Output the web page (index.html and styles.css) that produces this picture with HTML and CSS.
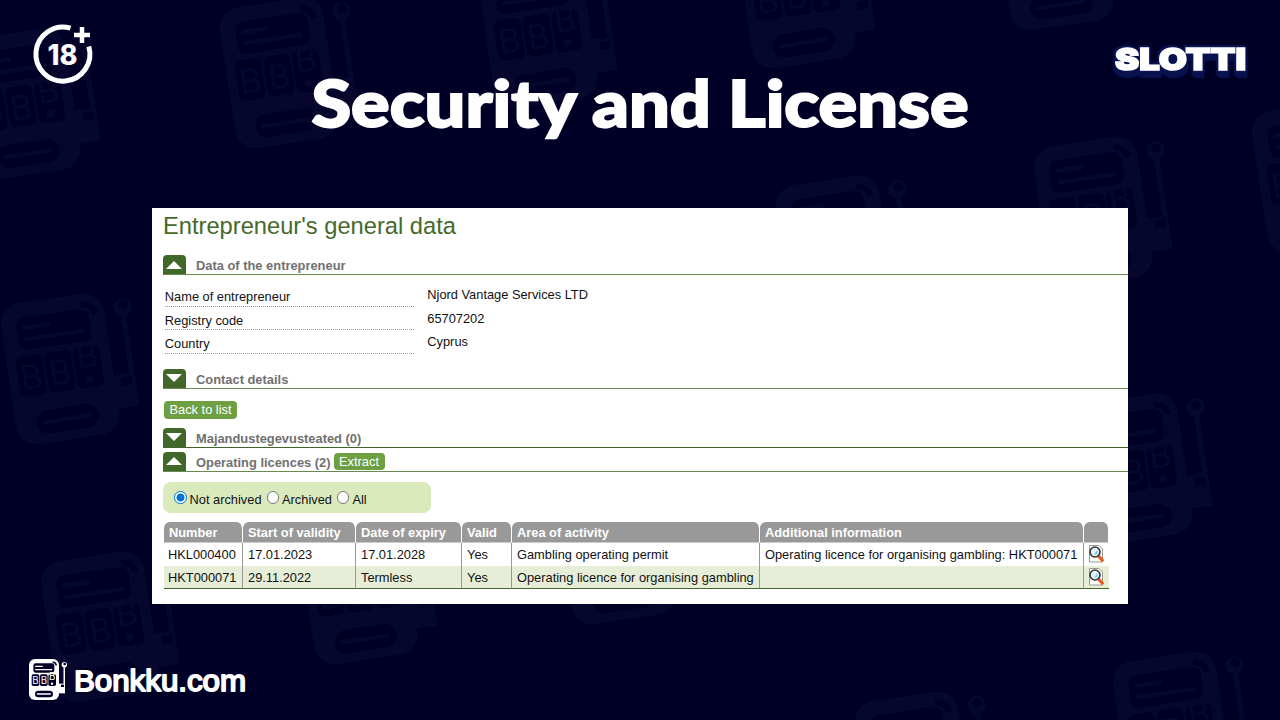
FILE: index.html
```
<!DOCTYPE html>
<html lang="en">
<head>
    <meta charset="UTF-8">
    <meta name="viewport" content="width=device-width, initial-scale=1.0">
    <title>Security and License</title>
    <link rel="stylesheet" href="styles.css">
</head>
<body>
    <!-- Slot machine pattern -->
    <svg class="pattern" width="1280" height="720" viewBox="0 0 1280 720">
        <defs>
            <g id="machine">
                <rect class="fill" x="0" y="0" width="90" height="123" rx="18"/>
                <path class="fill" d="M80 74h28v29H80z"/>
                <path class="fill" d="M103.500 22h4.500v60h-4.500z"/>
                <circle class="fill" cx="106" cy="17" r="8"/>
                <circle class="hole" cx="107" cy="15" r="4"/>
                <path class="hole" d="M96 77h9v7h-9z"/>
                <path class="hole-line" d="M71 9q9 1 11 10"/>
                <rect class="hole" x="13" y="13" width="63" height="28" rx="7"/>
                <path class="bar" d="M20 22h20M20 32h48"/>
                <rect class="hole" x="8" y="46" width="23" height="35" rx="5"/>
                <rect class="hole" x="33" y="46" width="23" height="35" rx="5"/>
                <rect class="hole" x="58" y="46" width="23" height="35" rx="5"/>
                <text class="reel" x="10" y="75">B</text>
                <text class="reel" x="35" y="75">B</text>
                <text class="reel" x="60" y="64">B</text>
                <circle class="fill" cx="69" cy="74" r="3.500"/>
                <rect class="hole" x="18" y="95" width="54" height="20" rx="10"/>
                <path class="bar" d="M25 105h39"/>
            </g>
        </defs>
        <g class="ghost">
            <use href="#machine" transform="translate(-41 41) rotate(-8.500) scale(1.160)"/>
            <use href="#machine" transform="translate(-2 306) rotate(-8.500) scale(1.160)"/>
            <use href="#machine" transform="translate(38 564) rotate(-8.500) scale(1.160)"/>
            <use href="#machine" transform="translate(217 10) rotate(-8.500) scale(1.160)"/>
            <use href="#machine" transform="translate(296 526) rotate(-8.500) scale(1.160)"/>
            <use href="#machine" transform="translate(476 -30) rotate(-8.500) scale(1.160)"/>
            <use href="#machine" transform="translate(554 486) rotate(-8.500) scale(1.160)"/>
            <use href="#machine" transform="translate(734 -70) rotate(-8.500) scale(1.160)"/>
            <use href="#machine" transform="translate(773 188) rotate(-8.500) scale(1.160)"/>
            <use href="#machine" transform="translate(852 704) rotate(-8.500) scale(1.160)"/>
            <use href="#machine" transform="translate(992 -108) rotate(-8.500) scale(1.160)"/>
            <use href="#machine" transform="translate(1031 149) rotate(-8.500) scale(1.160)"/>
            <use href="#machine" transform="translate(1071 406) rotate(-8.500) scale(1.160)"/>
            <use href="#machine" transform="translate(1110 664) rotate(-8.500) scale(1.160)"/>
            <use href="#machine" transform="translate(1249 114) rotate(-8.500) scale(1.160)"/>
        </g>
    </svg>

    <div class="slide">
        <header class="top">
            <svg class="age" width="62" height="62" viewBox="0 0 62 62">
                <path d="M38.500 4.200A27 27 0 1 0 56.800 22.500" fill="none" stroke="#fff" stroke-width="5"/>
                <path d="M50 3v16M42 11h16" stroke="#fff" stroke-width="4.500"/>
                <text class="age-text" x="15.500" y="40.500" textLength="30" lengthAdjust="spacingAndGlyphs">18</text>
            </svg>
            <h1 class="heading">
                <svg width="664" height="90" viewBox="0 0 664 90">
                    <text class="heading-text" x="2.500" y="56" textLength="657" lengthAdjust="spacingAndGlyphs">Security and License</text>
                </svg>
            </h1>
            <svg class="slotti" width="140" height="36" viewBox="0 0 140 36">
                <text class="slotti-text" x="4" y="26.500" textLength="131" lengthAdjust="spacingAndGlyphs">SLOTTI</text>
            </svg>
        </header>

        <main class="card">
            <h2 class="card-title">Entrepreneur's general data</h2>

            <div class="section">
                <span class="toggle"><svg width="16" height="8" viewBox="0 0 16 8"><path d="M0 8L8 0l8 8z"/></svg></span>
                <span class="section-name">Data of the entrepreneur</span>
            </div>
            <dl class="details">
                <dt>Name of entrepreneur</dt><dd>Njord Vantage Services LTD</dd>
                <dt>Registry code</dt><dd>65707202</dd>
                <dt>Country</dt><dd>Cyprus</dd>
            </dl>

            <div class="section">
                <span class="toggle"><svg width="16" height="8" viewBox="0 0 16 8"><path d="M0 0h16L8 8z"/></svg></span>
                <span class="section-name">Contact details</span>
            </div>
            <a class="btn btn-back">Back to list</a>

            <div class="section section-solid">
                <span class="toggle"><svg width="16" height="8" viewBox="0 0 16 8"><path d="M0 0h16L8 8z"/></svg></span>
                <span class="section-name">Majandustegevusteated (0)</span>
            </div>
            <div class="section section-licences">
                <span class="toggle"><svg width="16" height="8" viewBox="0 0 16 8"><path d="M0 8L8 0l8 8z"/></svg></span>
                <span class="section-name">Operating licences (2)</span>
                <a class="btn btn-extract">Extract</a>
            </div>

            <div class="filter">
                <span class="radio checked"></span><span class="radio-label">Not archived</span>
                <span class="radio"></span><span class="radio-label">Archived</span>
                <span class="radio"></span><span class="radio-label">All</span>
            </div>

            <table class="licences">
                <colgroup>
                    <col class="c1"><col class="c2"><col class="c3"><col class="c4"><col class="c5"><col class="c6"><col class="c7">
                </colgroup>
                <thead>
                    <tr>
                        <th>Number</th>
                        <th>Start of validity</th>
                        <th>Date of expiry</th>
                        <th>Valid</th>
                        <th>Area of activity</th>
                        <th>Additional information</th>
                        <th></th>
                    </tr>
                </thead>
                <tbody>
                    <tr>
                        <td>HKL000400</td>
                        <td>17.01.2023</td>
                        <td>17.01.2028</td>
                        <td>Yes</td>
                        <td>Gambling operating permit</td>
                        <td>Operating licence for organising gambling: HKT000071</td>
                        <td class="view">
                            <svg width="17" height="18" viewBox="0 0 17 18">
                                <path d="M1.500.500h9.500l3.500 3.500v13H1.500z" fill="#fff" stroke="#999"/>
                                <path d="M10.500 11l4.700 5.200" stroke="#ee5a12" stroke-width="3.200"/>
                                <circle cx="7" cy="7" r="5" fill="#e4f5fb" stroke="#333" stroke-width="1.600"/>
                                <path d="M6 10l3.500-5.500v4z" fill="#72c8e8"/>
                            </svg>
                        </td>
                    </tr>
                    <tr>
                        <td>HKT000071</td>
                        <td>29.11.2022</td>
                        <td>Termless</td>
                        <td>Yes</td>
                        <td>Operating licence for organising gambling</td>
                        <td></td>
                        <td class="view">
                            <svg width="17" height="18" viewBox="0 0 17 18">
                                <path d="M1.500.500h9.500l3.500 3.500v13H1.500z" fill="#fff" stroke="#999"/>
                                <path d="M10.500 11l4.700 5.200" stroke="#ee5a12" stroke-width="3.200"/>
                                <circle cx="7" cy="7" r="5" fill="#e4f5fb" stroke="#333" stroke-width="1.600"/>
                                <path d="M6 10l3.500-5.500v4z" fill="#72c8e8"/>
                            </svg>
                        </td>
                    </tr>
                </tbody>
            </table>
        </main>

        <footer class="brand">
            <svg class="brand-icon" width="40" height="42" viewBox="0 0 120 126">
                <use href="#machine"/>
            </svg>
            <svg width="176" height="42" viewBox="0 0 176 42">
                <text class="brand-text" x="0" y="31.500" textLength="172" lengthAdjust="spacingAndGlyphs">Bonkku.com</text>
            </svg>
        </footer>
    </div>
</body>
</html>
```
FILE: styles.css
```
body {
    margin: 0;
    width: 1280px;
    height: 720px;
    overflow: hidden;
    background-color: #000026;
    font-family: "Liberation Sans", Arial, sans-serif;
    color: #111;
}
svg {
    display: block;
    overflow: visible;
}

/* machine artwork, shared by the pattern and the brand icon */
.fill {
    fill: var(--machine);
}
.hole {
    fill: #000026;
}
.hole-line {
    fill: none;
    stroke: #000026;
    stroke-width: 5;
}
.bar {
    stroke: var(--machine);
    stroke-width: 4;
    stroke-linecap: round;
}
.reel {
    font-family: Inter, sans-serif;
    font-size: 29px;
    fill: var(--machine);
}
.pattern {
    position: absolute;
    left: 0;
    top: 0;
    overflow: hidden;
}
.ghost {
    --machine: #07072d;
}

.slide {
    position: relative;
    display: flex;
    flex-direction: column;
    height: 720px;
}
.top {
    display: flex;
    align-items: flex-start;
    height: 208px;
}
.age {
    margin: 24px 0 0 32px;
}
.age-text {
    font-family: Inter, sans-serif;
    font-weight: 800;
    font-size: 28px;
    fill: #fff;
}
.heading {
    margin: 71px 0 0 215px;
}
.heading-text {
    font-family: Lato, sans-serif;
    font-weight: 900;
    font-size: 64px;
    fill: #fff;
    stroke: #fff;
    stroke-width: 2;
}
.slotti {
    margin: 43px 0 0 138px;
    filter: drop-shadow(2px 0 0 #07124f) drop-shadow(-2px -2px 0 #07124f) drop-shadow(0 7px 0 #07124f);
}
.slotti-text {
    font-family: Inter, sans-serif;
    font-weight: 900;
    font-size: 30px;
    fill: #fff;
    stroke: #fff;
    stroke-width: 1.6;
}

.card {
    box-sizing: border-box;
    width: 976px;
    height: 395.5px;
    margin-left: 152px;
    padding-left: 11px;
    background-color: #fff;
    font-size: 12.83px;
}
.card-title {
    margin: 0;
    height: 47px;
    line-height: 36px;
    font-size: 23.7px;
    font-weight: normal;
    color: #45692a;
}
.section {
    display: flex;
    box-sizing: border-box;
    height: 20px;
    border-bottom: 1px solid #688a50;
}
.section-solid {
    margin-top: 9px;
    border-color: #40652a;
}
.section-licences {
    margin-top: 4px;
}
.toggle {
    display: flex;
    align-items: center;
    justify-content: center;
    width: 22.5px;
    background-color: #42672a;
    border-radius: 4px 4px 0 0;
}
.toggle svg {
    fill: #fff;
}
.section-name {
    margin-left: 10.5px;
    line-height: 22px;
    font-size: 12.88px;
    font-weight: bold;
    color: #707070;
}
.details {
    display: grid;
    grid-template-columns: 249.500px 1fr;
    grid-auto-rows: 23.600px;
    column-gap: 13px;
    margin: 8px 0 15.200px 1.800px;
}
.details dt {
    border-bottom: 1px dotted #999;
    line-height: 27px;
}
.details dd {
    margin: 0;
    line-height: 23px;
}
.btn {
    display: block;
    border-radius: 4px;
    background-color: #6ea043;
    color: #fff;
    text-align: center;
    height: 17.500px;
    line-height: 18px;
}
.btn-back {
    margin: 12.500px 0 0 1px;
    width: 73px;
}
.btn-extract {
    margin: 1.500px 0 0 3px;
    width: 51px;
    height: 17px;
}
.filter {
    display: flex;
    align-items: center;
    box-sizing: border-box;
    width: 268px;
    height: 30.500px;
    margin-top: 10.500px;
    padding-left: 11px;
    border-radius: 8px;
    background-color: #dbeabd;
}
.radio {
    box-sizing: border-box;
    width: 12.500px;
    height: 12.500px;
    border: 1px solid #777;
    border-radius: 50%;
    background-color: #fff;
}
.radio.checked {
    border-color: #0075d8;
    background: radial-gradient(circle, #0075d8 3.700px, #fff 4.300px);
}
.radio-label {
    margin: 3px 5px 0 3px;
}

.licences {
    table-layout: fixed;
    width: 945px;
    margin: 9px 0 0 1px;
    border-collapse: separate;
    border-spacing: 0;
}
.c1 { width: 79px; }
.c2 { width: 113px; }
.c3 { width: 106px; }
.c4 { width: 50px; }
.c5 { width: 248px; }
.c6 { width: 323.500px; }
.c7 { width: 25.500px; }
.licences th {
    box-sizing: border-box;
    height: 21px;
    padding: 1px 0 0 5px;
    text-align: left;
    color: #fff;
    background-color: #999;
    background-clip: padding-box;
    border-right: 1px solid #fff;
    border-bottom: 1px solid #ccc;
    border-radius: 6px 6px 0 0;
}
.licences td {
    height: 23px;
    padding: 0 0 0 5px;
    white-space: nowrap;
    border-right: 1px solid #999;
}
.licences td:first-child {
    padding-left: 4px;
}
.licences td:last-child {
    border-right: none;
}
.licences tr:last-child td {
    height: 22.500px;
    background-color: #e6eed8;
    border-bottom: 1px solid #42672a;
}
.licences .view {
    padding-left: 4px;
}

.brand {
    --machine: #fff;
    display: flex;
    align-items: center;
    margin: 55.500px 0 0 29px;
}
.brand-icon .reel {
    font-weight: 600;
}
.brand-text {
    font-size: 30px;
    fill: #fff;
    stroke: #fff;
    stroke-width: 1.8;
    stroke-linejoin: round;
}
.brand svg + svg {
    margin-left: 5px;
}
```
